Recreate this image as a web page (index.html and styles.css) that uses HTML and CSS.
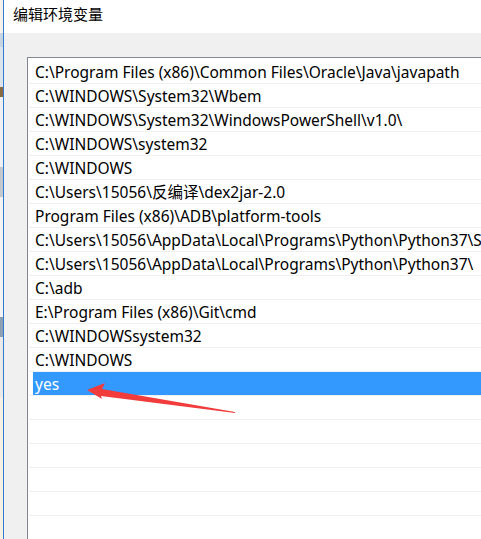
FILE: index.html
```html
<!DOCTYPE html>
<html lang="zh-CN">
<head>
<meta charset="utf-8">
<title>编辑环境变量</title>
<link rel="stylesheet" href="styles.css">
</head>
<body>
<div class="screen">
  <div class="behind">
    <span class="frag f1"></span>
    <span class="frag f2"></span>
    <span class="frag f3"></span>
    <span class="frag f4"></span>
    <span class="frag f5"></span>
    <span class="frag f6"></span>
    <span class="frag f7"></span>
    <span class="frag f8"></span>
    <span class="frag f9"></span>
    <span class="frag f10"></span>
  </div>
  <div class="window">
    <div class="titlebar">编辑环境变量</div>
    <div class="content">
      <div class="listbox">
        <div class="row"><span class="item">C:\Program Files (x86)\Common Files\Oracle\Java\javapath</span></div>
        <div class="row"><span class="item">C:\WINDOWS\System32\Wbem</span></div>
        <div class="row"><span class="item">C:\WINDOWS\System32\WindowsPowerShell\v1.0\</span></div>
        <div class="row"><span class="item">C:\WINDOWS\system32</span></div>
        <div class="row"><span class="item">C:\WINDOWS</span></div>
        <div class="row"><span class="item">C:\Users\15056\反编译\dex2jar-2.0</span></div>
        <div class="row"><span class="item">Program Files (x86)\ADB\platform-tools</span></div>
        <div class="row"><span class="item">C:\Users\15056\AppData\Local\Programs\Python\Python37\Scripts\</span></div>
        <div class="row"><span class="item">C:\Users\15056\AppData\Local\Programs\Python\Python37\</span></div>
        <div class="row"><span class="item">C:\adb</span></div>
        <div class="row"><span class="item">E:\Program Files (x86)\Git\cmd</span></div>
        <div class="row"><span class="item">C:\WINDOWSsystem32</span></div>
        <div class="row"><span class="item">C:\WINDOWS</span></div>
        <div class="row selected"><span class="item">yes</span></div>
        <div class="row"><span class="item"></span></div>
        <div class="row"><span class="item"></span></div>
        <div class="row"><span class="item"></span></div>
        <div class="row"><span class="item"></span></div>
        <div class="row"><span class="item"></span></div>
        <div class="row"><span class="item"></span></div>
      </div>
      <svg class="arrow" width="160" height="40" viewBox="0 0 160 40" xmlns="http://www.w3.org/2000/svg">
        <polygon points="2,12 20,5 17,11 150,34 150,35 16,18 17,21" fill="#f23b3b"/>
      </svg>
    </div>
  </div>
</div>
</body>
</html>
```
FILE: styles.css
```css
* { box-sizing: border-box; }
html, body { margin: 0; padding: 0; }
body {
  width: 481px;
  height: 539px;
  overflow: hidden;
  background: #f0f0f0;
  font-family: "Noto Sans", "Noto Sans CJK SC", sans-serif;
}
.screen {
  display: flex;
  width: 481px;
  height: 539px;
}
.behind {
  width: 3px;
  flex: none;
  background: #e9edf2;
  display: flex;
  flex-direction: column;
}
.frag { display: block; width: 3px; }
.f1 { height: 33px; background: #f7f2ea; }
.f2 { height: 14px; background: #c6d3e0; }
.f3 { height: 40px; background: #dde3ea; }
.f4 { height: 10px; background: #8a6a40; }
.f5 { height: 70px; background: #eef0f3; }
.f6 { height: 30px; background: #c2c8ce; }
.f7 { height: 120px; background: #f3f3f3; }
.f8 { height: 20px; background: #8c9fb3; }
.f9 { height: 60px; background: #eaeaea; }
.f10 { height: 142px; background: #f5f0e6; }
.window {
  flex: 1;
  display: flex;
  flex-direction: column;
  border-left: 1px solid #2f7bd0;
  min-width: 0;
}
.titlebar {
  height: 33px;
  flex: none;
  background: #ffffff;
  padding-left: 9px;
  font-family: "Noto Sans CJK SC", sans-serif;
  font-size: 15px;
  line-height: 28px;
  color: #000;
}
.content {
  flex: 1;
  position: relative;
  padding: 24px 0 0 23px;
  overflow: hidden;
}
.listbox {
  background: #fff;
  border-left: 1px solid #828790;
  border-top: 1px solid #828790;
  padding: 2px 0 0 1px;
  height: 600px;
}
.row {
  height: 24px;
  border-bottom: 1px solid #f0f0f0;
  padding-left: 4px;
  display: flex;
}
.item {
  flex: 1;
  min-width: 0;
  white-space: nowrap;
  overflow: hidden;
  padding: 1px 0 0 2px;
  font-size: 15.5px;
  line-height: 22px;
  color: #000;
}
.row.selected .item {
  background: #3399ff;
  color: #fff;
}
.arrow {
  position: absolute;
  left: 81px;
  top: 345px;
}
```
